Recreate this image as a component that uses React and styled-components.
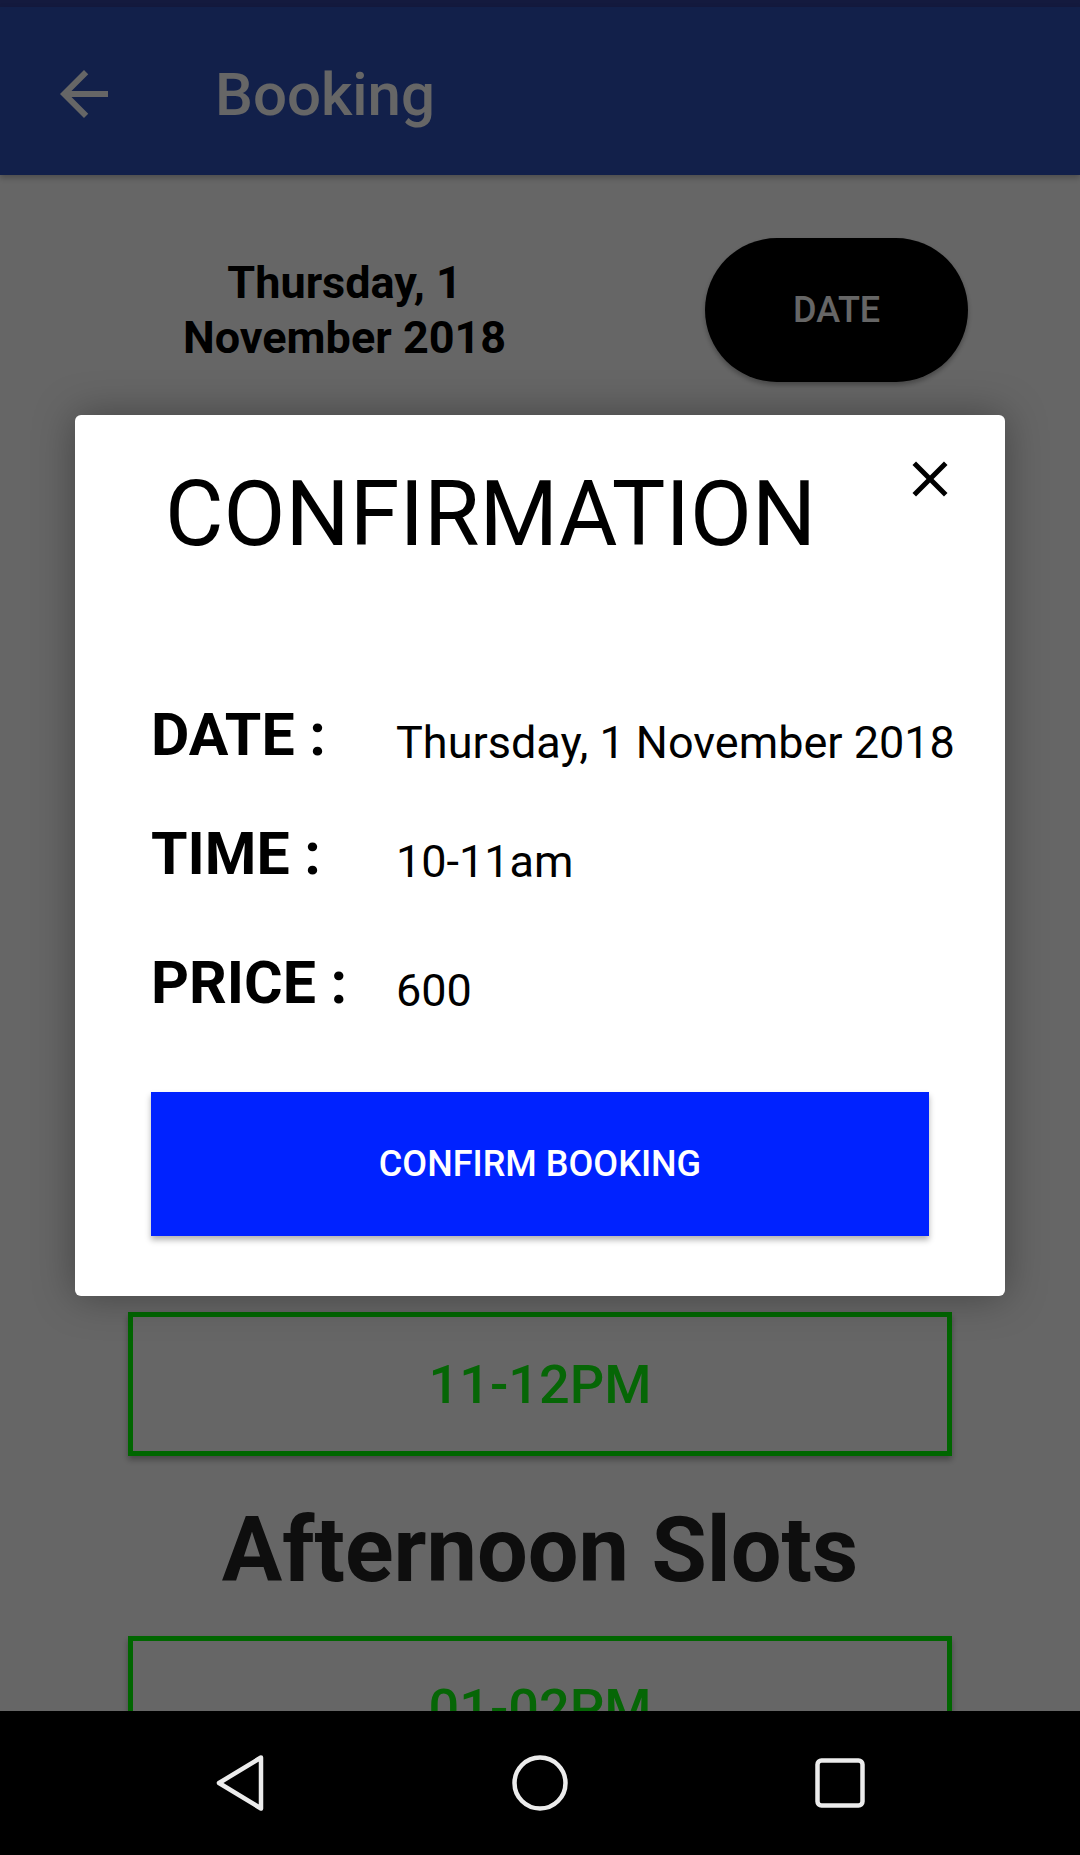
import React, {useState} from 'react'
import styled, {createGlobalStyle} from 'styled-components'

const GlobalStyle = createGlobalStyle`
    html, body {
        margin: 0;
        padding: 0;
        background: #000;
    }
    * {
        box-sizing: border-box;
    }
`

const Screen = styled.div`
    position: relative;
    width: 1080px;
    height: 1855px;
    display: flex;
    flex-direction: column;
    overflow: hidden;
    background: #fff;
    font-family: Roboto, "Liberation Sans", sans-serif;
`

const StatusBar = styled.div`
    height: 7px;
    flex-shrink: 0;
    background: #32419b;
`

const AppBar = styled.header`
    height: 168px;
    flex-shrink: 0;
    display: flex;
    align-items: center;
    gap: 95px;
    padding: 6px 0 0 48px;
    background: #2d50b9;
    color: #fff;
    box-shadow: 0 3px 6px rgba(0, 0, 0, 0.25);
    position: relative;
`

const IconButton = styled.button`
    width: 72px;
    height: 72px;
    padding: 0;
    border: none;
    background: none;
    display: flex;
    color: inherit;
`

const Title = styled.h1`
    margin: 0;
    font-size: 60px;
    font-weight: 500;
`

const Content = styled.main`
    flex: 1;
    overflow: hidden;
    display: flex;
    flex-direction: column;
    align-items: center;
`

const DateRow = styled.div`
    align-self: stretch;
    display: flex;
    align-items: center;
    gap: 199px;
    margin-top: 63px;
    padding-left: 183px;
`

const DateText = styled.div`
    font-size: 45px;
    font-weight: 700;
    line-height: 55px;
    text-align: center;
    color: #000;
`

const DateButton = styled.button`
    width: 263px;
    height: 144px;
    border: none;
    border-radius: 72px;
    background: #000;
    color: #fff;
    font-family: inherit;
    font-size: 36px;
    font-weight: 500;
    box-shadow: 0 3px 5px rgba(0, 0, 0, 0.3);
`

const SectionTitle = styled.h2`
    margin: ${p => p.$top}px 0 33px;
    font-size: 90px;
    font-weight: 700;
    line-height: normal;
    color: #242424;
`

const SlotList = styled.div`
    display: flex;
    flex-direction: column;
    gap: 40px;
`

const Slot = styled.button`
    width: 824px;
    height: 144px;
    border: 5px solid #00ff00;
    background: transparent;
    display: flex;
    align-items: center;
    justify-content: center;
    font-family: inherit;
    font-size: 54px;
    font-weight: 500;
    color: #10ff10;
    box-shadow: 0 4px 6px rgba(0, 0, 0, 0.3);
`

const NavBar = styled.nav`
    height: 144px;
    flex-shrink: 0;
    position: relative;
    z-index: 2;
    background: #000;
    display: flex;
    align-items: center;
    justify-content: center;
    gap: 240px;
    color: #ececec;
`

const Overlay = styled.div`
    position: absolute;
    top: 0;
    left: 0;
    right: 0;
    bottom: 144px;
    z-index: 1;
    background: rgba(0, 0, 0, 0.6);
    display: flex;
    align-items: center;
    justify-content: center;
`

const Modal = styled.div`
    position: relative;
    width: 930px;
    padding: 55px 76px 60px;
    background: #fff;
    border-radius: 6px;
    box-shadow: 0 0 40px rgba(0, 0, 0, 0.35);
`

const ModalTitle = styled.h2`
    margin: 0 0 140px 14px;
    font-size: 90px;
    font-weight: 400;
    line-height: 90px;
    color: #000;
`

const CloseButton = styled.button`
    position: absolute;
    top: 34px;
    right: 45px;
    width: 60px;
    height: 60px;
    padding: 0;
    border: none;
    background: none;
    display: flex;
    color: #000;
`

const InfoRow = styled.div`
    display: grid;
    grid-template-columns: 245px auto;
    align-items: end;
    margin-top: ${p => p.$top}px;
    white-space: nowrap;
`

const Label = styled.span`
    font-size: 59px;
    font-weight: 700;
    color: #000;
`

const Value = styled.span`
    font-size: 45px;
    font-weight: 400;
    color: #000;
`

const ConfirmButton = styled.button`
    width: 100%;
    height: 144px;
    margin-top: 75px;
    border: none;
    background: #0022ff;
    color: #fff;
    font-family: inherit;
    font-size: 36px;
    font-weight: 500;
    box-shadow: 0 4px 6px rgba(0, 0, 0, 0.3);
`

const morning = ['08-09AM', '09-10AM', '10-11AM', '11-12PM']
const afternoon = ['01-02PM', '02-03PM', '03-04PM']

const details = [
    {label: 'DATE :', value: 'Thursday, 1 November 2018', top: 0},
    {label: 'TIME :', value: '10-11am', top: 50},
    {label: 'PRICE :', value: '600', top: 60},
]

const App = () => {

    const [showModal, setShowModal] = useState(true)

    return (
        <Screen>
            <GlobalStyle />
            <StatusBar />
            <AppBar>
                <IconButton aria-label="back">
                    <svg width="72" height="72" viewBox="0 0 24 24" fill="currentColor">
                        <path d="M20 11H7.83l5.59-5.59L12 4l-8 8 8 8 1.41-1.41L7.83 13H20v-2z" />
                    </svg>
                </IconButton>
                <Title>Booking</Title>
            </AppBar>
            <Content>
                <DateRow>
                    <DateText>Thursday, 1<br />November 2018</DateText>
                    <DateButton>DATE</DateButton>
                </DateRow>
                <SectionTitle $top={240}>Morning Slots</SectionTitle>
                <SlotList>
                    {morning.map(s => <Slot key={s}>{s}</Slot>)}
                </SlotList>
                <SectionTitle $top={42}>Afternoon Slots</SectionTitle>
                <SlotList>
                    {afternoon.map(s => <Slot key={s}>{s}</Slot>)}
                </SlotList>
            </Content>
            <NavBar>
                <svg width="60" height="60" viewBox="0 0 60 60" fill="none" stroke="currentColor" strokeWidth="4.5" strokeLinejoin="round">
                    <path d="M51 4.5 L9 30 L51 55.5 Z" />
                </svg>
                <svg width="60" height="60" viewBox="0 0 60 60" fill="none" stroke="currentColor" strokeWidth="4.5">
                    <circle cx="30" cy="30" r="25.5" />
                </svg>
                <svg width="60" height="60" viewBox="0 0 60 60" fill="none" stroke="currentColor" strokeWidth="4.5">
                    <rect x="7.5" y="7.5" width="45" height="45" rx="4" />
                </svg>
            </NavBar>
            {showModal && (
                <Overlay>
                    <Modal>
                        <CloseButton aria-label="close" onClick={() => setShowModal(false)}>
                            <svg width="60" height="60" viewBox="0 0 24 24" fill="currentColor">
                                <path d="M19 6.41L17.59 5 12 10.59 6.41 5 5 6.41 10.59 12 5 17.59 6.41 19 12 13.41 17.59 19 19 17.59 13.41 12z" />
                            </svg>
                        </CloseButton>
                        <ModalTitle>CONFIRMATION</ModalTitle>
                        {details.map(d => (
                            <InfoRow key={d.label} $top={d.top}>
                                <Label>{d.label}</Label>
                                <Value>{d.value}</Value>
                            </InfoRow>
                        ))}
                        <ConfirmButton>CONFIRM BOOKING</ConfirmButton>
                    </Modal>
                </Overlay>
            )}
        </Screen>
    )
}

export default App
